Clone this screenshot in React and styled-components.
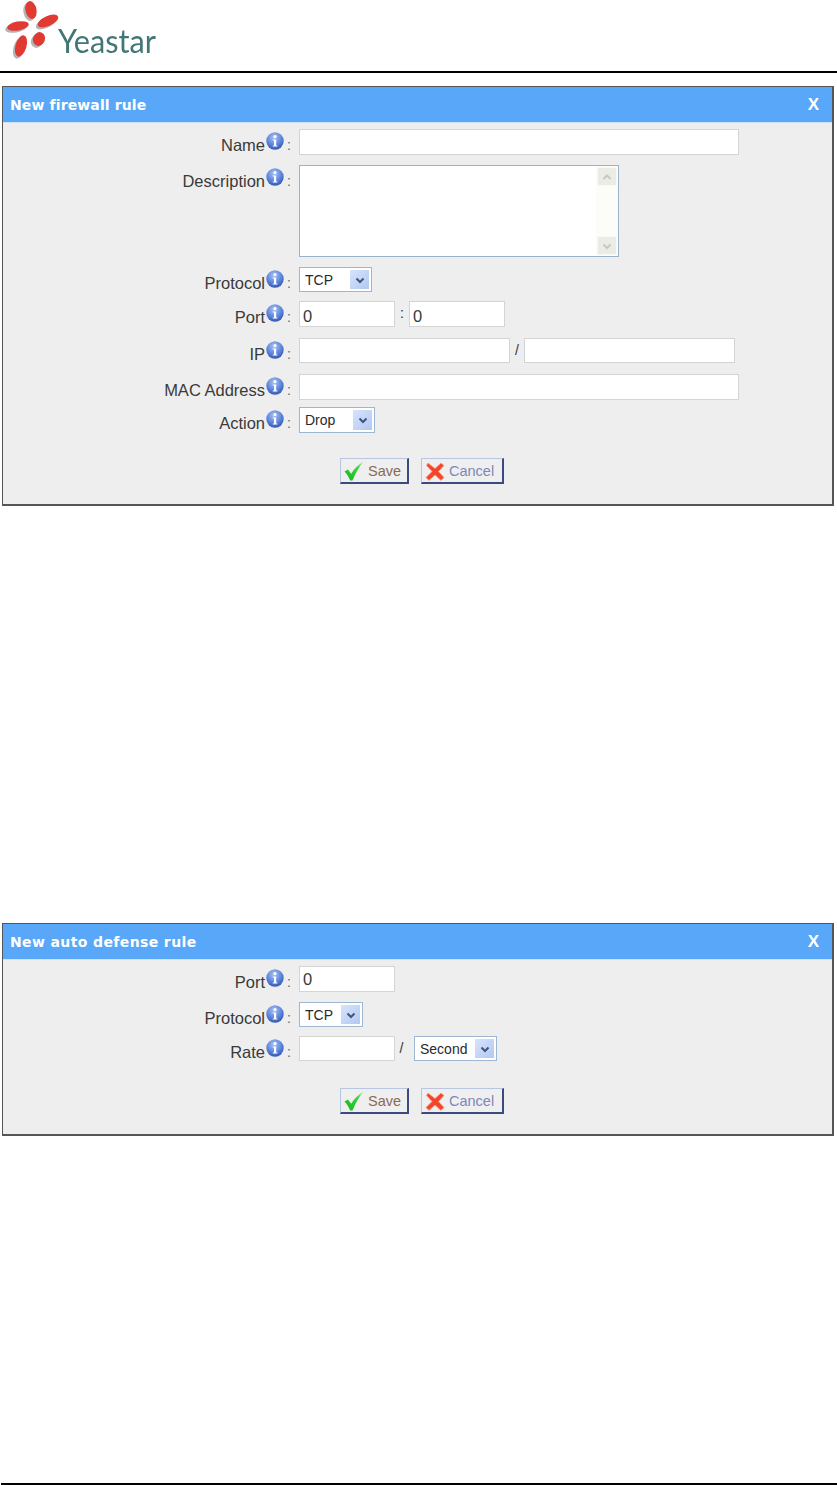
import React from "react"
import styled, { createGlobalStyle } from "styled-components"

const GlobalStyle = createGlobalStyle`
	html, body {
		margin: 0;
		padding: 0;
		background: #fff;
		font-family: "Liberation Sans", Arial, sans-serif;
	}
	* {
		box-sizing: border-box;
	}
`

const Page = styled.div`
	display: flex;
	flex-direction: column;
	width: 837px;
	height: 1485px;
	overflow: hidden;
`

const PageHeader = styled.header`
	display: flex;
	align-items: flex-start;
	height: 73px;
	border-bottom: 2px solid #000;
	flex-shrink: 0;
`

const LogoMark = styled.svg`
	display: block;
	width: 60px;
	height: 60px;
	flex-shrink: 0;
	filter: blur(0.4px);
`

const LogoText = styled.span`
	font-family: Lato, sans-serif;
	font-size: 33px;
	line-height: 40px;
	color: #437676;
	margin: 20px 0 0 -2px;
	transform: scaleX(0.93);
	transform-origin: left center;
`

const PageFooter = styled.footer`
	margin: auto 0 0 1px;
	height: 2px;
	background: #000;
	flex-shrink: 0;
`

const Panel = styled.section`
	margin: ${props => props.$top}px 3px 0 2px;
	border: 1px solid #555;
	border-right-width: 2px;
	border-bottom-width: 2px;
	background: #eeeeee;
	flex-shrink: 0;
`

const PanelHead = styled.div`
	display: flex;
	justify-content: space-between;
	align-items: center;
	height: 36px;
	padding: 0 13px 0 7px;
	background: #58a7f8;
	border-bottom: 1px solid #cfe2f7;
	color: #fff;
`

const PanelTitle = styled.span`
	font-family: "DejaVu Sans", sans-serif;
	font-weight: bold;
	font-size: 14px;
	letter-spacing: ${props => props.$spacing}px;
`

const CloseMark = styled.span`
	font-size: 17px;
	font-weight: bold;
`

const PanelBody = styled.form`
	display: flex;
	flex-direction: column;
	padding: 6px 0 20px;
`

const Row = styled.div`
	display: flex;
	align-items: flex-start;
	margin-top: ${props => props.$top || 0}px;
`

const Label = styled.label`
	display: flex;
	justify-content: flex-end;
	align-items: flex-start;
	flex-shrink: 0;
	width: 288px;
	height: 24px;
	margin-right: 8px;
	padding-top: 3px;
	font-size: 16.5px;
	line-height: 20px;
	color: #3a3a3a;
`

const LabelText = styled.span`
	padding-top: 3px;
`

const Colon = styled.span`
	padding: 3px 0 0 1px;
	width: 5px;
	font-size: 14px;
	color: #666;
`

const InfoSvg = styled.svg`
	display: block;
	width: 18px;
	height: 18px;
	margin: 0 2px 0 1px;
`

const Field = styled.input`
	display: block;
	width: ${props => props.$width}px;
	height: ${props => props.$height || 25}px;
	padding: ${props => props.$inset || 0}px 2px 0 3px;
	background: #fff;
	border: 1px solid #d4d4d4;
	border-radius: 0;
	outline: none;
	font-family: "Liberation Sans", Arial, sans-serif;
	font-size: 16.5px;
	color: #3a3a3a;
`

const Separator = styled.span`
	width: ${props => props.$width}px;
	margin-right: ${props => props.$after || 0}px;
	text-align: center;
	font-size: 14px;
	line-height: 25px;
	color: #333;
`

const AreaBox = styled.div`
	display: flex;
	width: 320px;
	height: 92px;
	background: #fff;
	border: 1px solid #9ab3cb;
`

const Area = styled.textarea`
	flex: 1;
	border: none;
	outline: none;
	resize: none;
	background: transparent;
`

const Scrollbar = styled.div`
	display: flex;
	flex-direction: column;
	justify-content: space-between;
	width: 22px;
	padding: 1px;
	background: #fcfcf8;
`

const ScrollButton = styled.div`
	display: flex;
	align-items: center;
	justify-content: center;
	height: 19px;
	background: #ecece6;
	border: 1px solid #f8f8f4;
	color: #c8c8c2;
`

const SelectBox = styled.div`
	display: flex;
	align-items: center;
	justify-content: space-between;
	width: ${props => props.$width}px;
	height: ${props => props.$height || 25}px;
	padding: 2px 2px 2px 5px;
	background: #fff;
	border: 1px solid #9db7d0;
	font-size: 14px;
	color: #2a2a2a;
`

const SelectArrow = styled.span`
	display: flex;
	align-items: center;
	justify-content: center;
	width: 19px;
	height: 100%;
	background: linear-gradient(135deg, #d7e3fb, #b2c8f3);
	color: #3d5680;
`

const Actions = styled.div`
	display: flex;
	justify-content: flex-start;
	gap: 12px;
	margin: ${props => props.$top}px 0 0 337px;
`

const ActionButton = styled.button`
	display: flex;
	align-items: center;
	gap: 3px;
	width: ${props => props.$width}px;
	height: 26px;
	padding: 0 0 0 2px;
	background: #efefef;
	border: 1px solid #b8c6e2;
	border-right: 2px solid #3b4a80;
	border-bottom: 2px solid #3b4a80;
	font-family: "Liberation Sans", Arial, sans-serif;
	font-size: 14.5px;
	color: ${props => props.$color};
`

const ButtonIcon = styled.svg`
	display: block;
	width: 22px;
	height: 22px;
	flex-shrink: 0;
`

const Logo = () => (
	<LogoMark viewBox="0 0 60 60">
		<g fill="#9b9b9b" opacity="0.75" transform="translate(-2 2)">
			<ellipse cx="31" cy="10" rx="5.5" ry="9" transform="rotate(-12 31 10)" />
			<ellipse cx="48" cy="21" rx="11" ry="5" transform="rotate(-24 48 21)" />
			<ellipse cx="18" cy="26" rx="11" ry="4.5" transform="rotate(-10 18 26)" />
			<ellipse cx="21" cy="46" rx="5.5" ry="11" transform="rotate(16 21 46)" />
			<ellipse cx="39" cy="39" rx="6" ry="7" transform="rotate(20 39 39)" />
		</g>
		<g fill="#e13a33">
			<ellipse cx="31" cy="10" rx="5.5" ry="9" transform="rotate(-12 31 10)" />
			<ellipse cx="48" cy="21" rx="11" ry="5" transform="rotate(-24 48 21)" />
			<ellipse cx="18" cy="26" rx="11" ry="4.5" transform="rotate(-10 18 26)" />
			<ellipse cx="21" cy="46" rx="5.5" ry="11" transform="rotate(16 21 46)" />
			<ellipse cx="39" cy="39" rx="6" ry="7" transform="rotate(20 39 39)" />
		</g>
	</LogoMark>
)

const Info = () => (
	<InfoSvg viewBox="0 0 18 18">
		<defs>
			<radialGradient id="infoBall" cx="45%" cy="30%" r="70%">
				<stop offset="0" stopColor="#a9c3f4" />
				<stop offset="0.6" stopColor="#5f86dc" />
				<stop offset="1" stopColor="#3558b4" />
			</radialGradient>
		</defs>
		<circle cx="9" cy="9" r="8.7" fill="url(#infoBall)" />
		<circle cx="9" cy="4.6" r="1.6" fill="#fff" />
		<path d="M6.8 7.4h3.4v6h1.2v1.2H6.8v-1.2H8V8.6H6.8z" fill="#fff" />
	</InfoSvg>
)

const Chevron = ({ up, size = 10 }) => (
	<svg width={size} height={size} viewBox="0 0 10 10">
		<path
			d={up ? "M1.5 7 5 3.5 8.5 7" : "M1.5 3.5 5 7 8.5 3.5"}
			fill="none"
			stroke="currentColor"
			strokeWidth="2"
		/>
	</svg>
)

const Select = ({ value, width, height }) => (
	<SelectBox $width={width} $height={height}>
		<span>{value}</span>
		<SelectArrow><Chevron /></SelectArrow>
	</SelectBox>
)

const FieldLabel = ({ children }) => (
	<Label>
		<LabelText>{children}</LabelText>
		<Info />
		<Colon>:</Colon>
	</Label>
)

const SaveCancel = ({ top }) => (
	<Actions $top={top}>
		<ActionButton type="button" $width={69} $color="#8b6a52">
			<ButtonIcon viewBox="0 0 22 22">
				<defs>
					<linearGradient id="checkFill" x1="0" y1="1" x2="1" y2="0">
						<stop offset="0" stopColor="#12b81c" />
						<stop offset="0.7" stopColor="#3fd23c" />
						<stop offset="1" stopColor="#b7eeb0" />
					</linearGradient>
				</defs>
				<path d="M1.5 11.5 5 9.5l3.2 4.2C11 9 15 5 20.5 1.5 16 7 12.5 13 9.5 20.5H7.2C5.8 17 4 14 1.5 11.5z" fill="url(#checkFill)" />
			</ButtonIcon>
			Save
		</ActionButton>
		<ActionButton type="button" $width={83} $color="#7d88ba">
			<ButtonIcon viewBox="0 0 22 22">
				<path d="M4 3 11 8.5 17 3l3 2.5-5.5 6 5.5 6-3 3-6-5.5L5 20.5l-3-3 6-6-5.5-6z" fill="#f2452a" stroke="#f9a08c" strokeWidth="0.8" />
			</ButtonIcon>
			Cancel
		</ActionButton>
	</Actions>
)

const App = () => (
	<Page>
		<GlobalStyle />
		<PageHeader>
			<Logo />
			<LogoText>Yeastar</LogoText>
		</PageHeader>

		<Panel $top={13}>
			<PanelHead>
				<PanelTitle $spacing={0.12}>New firewall rule</PanelTitle>
				<CloseMark>X</CloseMark>
			</PanelHead>
			<PanelBody>
				<Row>
					<FieldLabel>Name</FieldLabel>
					<Field $width={440} $height={26} />
				</Row>
				<Row $top={10}>
					<FieldLabel>Description</FieldLabel>
					<AreaBox>
						<Area />
						<Scrollbar>
							<ScrollButton><Chevron up /></ScrollButton>
							<ScrollButton><Chevron /></ScrollButton>
						</Scrollbar>
					</AreaBox>
				</Row>
				<Row $top={10}>
					<FieldLabel>Protocol</FieldLabel>
					<Select value="TCP" width={73} />
				</Row>
				<Row $top={9}>
					<FieldLabel>Port</FieldLabel>
					<Field $width={96} $height={26} $inset={4} defaultValue="0" />
					<Separator $width={14}>:</Separator>
					<Field $width={96} $height={26} $inset={4} defaultValue="0" />
				</Row>
				<Row $top={11}>
					<FieldLabel>IP</FieldLabel>
					<Field $width={211} />
					<Separator $width={14}>/</Separator>
					<Field $width={211} />
				</Row>
				<Row $top={11}>
					<FieldLabel>MAC Address</FieldLabel>
					<Field $width={440} $height={26} />
				</Row>
				<Row $top={7}>
					<FieldLabel>Action</FieldLabel>
					<Select value="Drop" width={76} height={26} />
				</Row>
				<SaveCancel top={25} />
			</PanelBody>
		</Panel>

		<Panel $top={417}>
			<PanelHead>
				<PanelTitle $spacing={0.38}>New auto defense rule</PanelTitle>
				<CloseMark>X</CloseMark>
			</PanelHead>
			<PanelBody>
				<Row>
					<FieldLabel>Port</FieldLabel>
					<Field $width={96} $height={26} defaultValue="0" />
				</Row>
				<Row $top={10}>
					<FieldLabel>Protocol</FieldLabel>
					<Select value="TCP" width={64} />
				</Row>
				<Row $top={9}>
					<FieldLabel>Rate</FieldLabel>
					<Field $width={96} />
					<Separator $width={13} $after={6}>/</Separator>
					<Select value="Second" width={83} />
				</Row>
				<SaveCancel top={27} />
			</PanelBody>
		</Panel>

		<PageFooter />
	</Page>
)

export default App
